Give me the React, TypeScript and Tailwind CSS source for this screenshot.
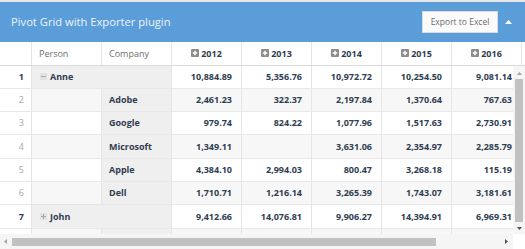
import React from "react";

type Row = {
  n: number;
  group?: string;
  expanded?: boolean;
  company?: string;
  vals: string[];
  hideNum?: boolean;
};

const rows: Row[] = [
  { n: 1, group: "Anne", expanded: true, vals: ["10,884.89", "5,356.76", "10,972.72", "10,254.50", "9,081.14"] },
  { n: 2, company: "Adobe", vals: ["2,461.23", "322.37", "2,197.84", "1,370.64", "767.63"] },
  { n: 3, company: "Google", vals: ["979.74", "824.22", "1,077.96", "1,517.63", "2,730.91"] },
  { n: 4, company: "Microsoft", vals: ["1,349.11", "", "3,631.06", "2,354.97", "2,285.79"] },
  { n: 5, company: "Apple", vals: ["4,384.10", "2,994.03", "800.47", "3,268.18", "115.19"] },
  { n: 6, company: "Dell", vals: ["1,710.71", "1,216.14", "3,265.39", "1,743.07", "3,181.61"] },
  { n: 7, group: "John", expanded: false, vals: ["9,412.66", "14,076.81", "9,906.27", "14,394.91", "6,969.31"] },
  { n: 8, company: "", hideNum: true, vals: ["", "", "", "", ""] },
];

const years = ["2012", "2013", "2014", "2015", "2016"];

function PlusBox() {
  return (
    <svg width="8" height="8" viewBox="0 0 8 8" className="shrink-0">
      <rect x="0" y="0" width="8" height="8" rx="1" fill="#8d8d8d" />
      <path d="M4 1.8V6.2M1.8 4H6.2" stroke="#ffffff" strokeWidth="1.4" />
    </svg>
  );
}

function Toggle({ open }: { open: boolean }) {
  return (
    <svg width="7" height="7" viewBox="0 0 7 7" className="shrink-0">
      <rect x="0" y="0" width="7" height="7" fill="#e2e2e2" />
      {open ? (
        <path d="M1 3.5H6" stroke="#a9a9a9" strokeWidth="1" />
      ) : (
        <path d="M1 3.5H6M3.5 1V6" stroke="#a9a9a9" strokeWidth="1" />
      )}
    </svg>
  );
}

const gridCols = "grid grid-cols-[32px_70px_70px_70px_70px_70px_70px_70px_70px] w-[592px]";

export default function App() {
  return (
    <div className="w-[525px] h-[249px] overflow-hidden bg-white border-t-2 border-[#e6e6e6] flex flex-col font-['Open_Sans',sans-serif]">
      {/* Title bar */}
      <div className="h-[40px] shrink-0 bg-[#5b9dd9] flex items-center justify-between pl-[11px] pr-[13px]">
        <span className="text-[11.2px] text-[#eef4fb] leading-none">Pivot Grid with Exporter plugin</span>
        <div className="flex items-center">
          <button className="w-[76px] h-[22px] bg-[#fbfbfb] border border-[#dadada] text-[8.5px] text-[#6b6b6b] leading-none">
            Export to Excel
          </button>
          <svg width="7" height="4" viewBox="0 0 7 4" className="ml-[7px]">
            <path d="M0 4L3.5 0L7 4Z" fill="#ffffff" />
          </svg>
        </div>
      </div>

      {/* Column header */}
      <div className="h-[23.5px] shrink-0 overflow-hidden border-b border-[#d9d9d9]">
        <div className={`${gridCols} h-full text-[9px]`}>
          <div className="border-r border-[#e6e6e6]" />
          <div className="border-r border-[#e6e6e6] flex items-center pl-[7px] text-[#6f6f6f]">Person</div>
          <div className="border-r border-[#e6e6e6] flex items-center pl-[7px] text-[#6f6f6f]">Company</div>
          {years.map((y) => (
            <div key={y} className="border-r border-[#e6e6e6] flex items-center justify-center gap-[2px] font-bold text-[#2f3d50]">
              <PlusBox />
              <span>{y}</span>
            </div>
          ))}
          <div className="border-r border-[#e6e6e6]" />
        </div>
      </div>

      {/* Body */}
      <div className="flex-1 flex min-h-0">
        <div className="flex-1 overflow-hidden">
          {rows.map((r) => {
            const even = r.n % 2 === 0;
            const stripe = even ? "bg-[#f7f7f7]" : "bg-white";
            return (
              <div key={r.n} className={`${gridCols} h-[23.3px] shrink-0 text-[9px] border-b border-[#e8e8e8]`}>
                <div
                  className={`bg-white border-r border-[#e6e6e6] flex items-center justify-end pr-[7px] ${
                    r.group ? "font-bold text-[#2f3d50]" : "text-[#a8a8a8]"
                  }`}
                >
                  {r.hideNum ? "" : r.n}
                </div>
                {r.group ? (
                  <div className="col-span-2 bg-[#efefef] border-r border-[#e6e6e6] flex items-center pl-[8px] gap-[3px] font-bold text-[#2f3d50]">
                    <Toggle open={!!r.expanded} />
                    <span>{r.group}</span>
                  </div>
                ) : (
                  <>
                    <div className={`${stripe} border-r border-[#e6e6e6]`} />
                    <div className="bg-[#efefef] border-r border-[#e6e6e6] flex items-center pl-[7px] font-bold text-[#2f3d50]">
                      {r.company}
                    </div>
                  </>
                )}
                {r.vals.map((v, i) => (
                  <div
                    key={i}
                    className={`${r.group ? "bg-white" : stripe} border-r border-[#e6e6e6] flex items-center justify-end pr-[9px] font-bold text-[#2f3d50]`}
                  >
                    {v}
                  </div>
                ))}
                <div className={`${r.group ? "bg-white" : stripe} border-r border-[#e6e6e6]`} />
              </div>
            );
          })}
        </div>
        {/* Vertical scrollbar */}
        <div className="w-[12px] shrink-0 bg-[#f5f5f5] flex flex-col items-center">
          <svg width="5" height="3" viewBox="0 0 5 3" className="mt-[6px]">
            <path d="M0 3L2.5 0L5 3Z" fill="#a3a3a3" />
          </svg>
          <div className="w-[8px] flex-1 bg-[#c1c1c1] mt-[4px] mb-[5px]" />
          <svg width="5" height="3" viewBox="0 0 5 3" className="mb-[4px]">
            <path d="M0 0L2.5 3L5 0Z" fill="#505050" />
          </svg>
        </div>
      </div>

      {/* Horizontal scrollbar */}
      <div className="h-[15px] shrink-0 flex">
        <div className="flex-1 bg-[#f5f5f5] flex items-center">
          <svg width="3" height="5" viewBox="0 0 3 5" className="ml-[4px]">
            <path d="M3 0L0 2.5L3 5Z" fill="#a3a3a3" />
          </svg>
          <div className="ml-[5px] w-[424px] h-[8px] bg-[#c1c1c1]" />
          <div className="flex-1" />
          <svg width="3" height="5" viewBox="0 0 3 5" className="mr-[5px]">
            <path d="M0 0L3 2.5L0 5Z" fill="#505050" />
          </svg>
        </div>
        <div className="w-[12px] bg-white" />
      </div>
    </div>
  );
}
